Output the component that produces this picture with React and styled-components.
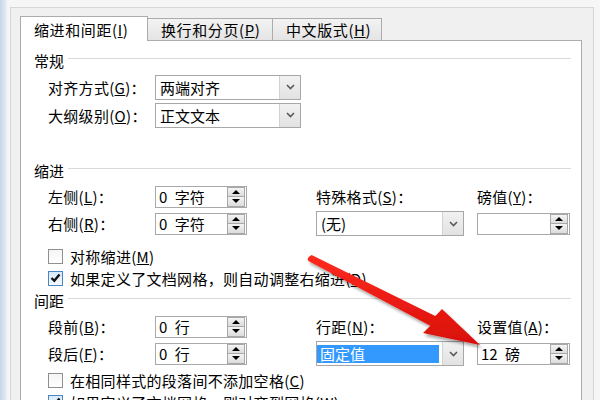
import React from 'react';
import styled, { createGlobalStyle } from 'styled-components';

const GlobalStyle = createGlobalStyle`
  html, body {
    margin: 0;
    padding: 0;
  }
  body {
    background: #f6f6f6;
    font-family: "Noto Sans CJK SC", "Liberation Sans", sans-serif;
  }
`;

const Screen = styled.div`
  position: relative;
  width: 600px;
  height: 400px;
  overflow: hidden;
  display: flex;
  background: #f6f6f6;
`;

const DesktopEdge = styled.div`
  flex: none;
  width: 7px;
  background: linear-gradient(to right, #c4d5ea, #e9eff6);
`;

const Dialog = styled.div`
  flex: none;
  box-sizing: border-box;
  width: 584px;
  height: 420px;
  margin: 7px 0 0 3px;
  padding: 8px 11px 0 9px;
  border: 1px solid #d6d6d6;
  border-bottom: none;
  background: #f0f0f0;
  display: flex;
  flex-direction: column;
`;

const TabBar = styled.div`
  display: flex;
  align-items: flex-end;
  height: 24px;
`;

const Tab = styled.div`
  position: relative;
  box-sizing: border-box;
  width: ${p => p.$width}px;
  height: ${p => (p.$active ? 25 : 22)}px;
  margin-left: ${p => (p.$first ? 0 : -1)}px;
  margin-bottom: ${p => (p.$active ? -1 : 0)}px;
  z-index: ${p => (p.$active ? 2 : 1)};
  padding-left: 13px;
  display: flex;
  align-items: center;
  border: 1px solid #acacac;
  border-bottom: none;
  background: ${p => (p.$active ? '#ffffff' : 'linear-gradient(#f3f3f3, #e4e4e4)')};
  font-size: 15px;
  letter-spacing: 0.6px;
  color: #000;
  white-space: nowrap;
`;

const Panel = styled.div`
  flex: 1;
  box-sizing: border-box;
  border: 1px solid #acacac;
  background: #ffffff;
  padding-right: 10px;
  display: flex;
  flex-direction: column;
`;

const SectionHead = styled.div`
  display: flex;
  align-items: center;
  height: 20px;
  margin-top: ${p => p.$gap}px;
  padding-left: 13px;
  font-size: 15px;
  color: #000;

  &::after {
    content: '';
    flex: 1;
    height: 1px;
    margin: -3px 0 0 4px;
    background: #dadada;
  }
`;

const FieldRow = styled.div`
  display: flex;
  align-items: center;
  height: 28px;
  padding-left: 27px;
  margin-top: ${p => p.$gap || 0}px;
`;

const Label = styled.span`
  width: ${p => (p.$width ? `${p.$width}px` : 'auto')};
  flex: none;
  font-size: 15px;
  letter-spacing: 0.3px;
  color: #000;
  white-space: nowrap;
`;

const Grid = styled.div`
  display: grid;
  grid-template-columns: 107px 92px 69px 148px 13px 93px;
  grid-auto-rows: 27px;
  align-items: center;
  padding-left: 27px;
  margin-top: ${p => p.$gap}px;
`;

const Cell = styled.div`
  grid-column: ${p => p.$col};
  grid-row: ${p => p.$row};
  display: flex;
  align-items: center;
`;

const SelectBox = styled.div`
  box-sizing: border-box;
  width: ${p => p.$width}px;
  height: 25px;
  display: flex;
  border: 1px solid #a7a7a7;
  background: #fff;
`;

const SelectValue = styled.div`
  flex: 1;
  display: flex;
  align-items: center;
  padding-left: 4px;
  font-size: 15px;
  color: #000;
  white-space: nowrap;
`;

const SelectHighlight = styled.div`
  flex: 1;
  align-self: center;
  height: 18px;
  margin: 0 3px 0 0;
  padding-left: 3px;
  display: flex;
  align-items: center;
  background: #3399ff;
  color: #fff;
  font-size: 15px;
  white-space: nowrap;
`;

const DropButton = styled.div`
  width: 20px;
  flex: none;
  display: flex;
  align-items: center;
  justify-content: center;
  background: linear-gradient(#f1f1f1, #e2e2e2);
  border-left: 1px solid #d2d2d2;
`;

const SpinBox = styled.div`
  box-sizing: border-box;
  width: ${p => p.$width}px;
  height: 22px;
  display: flex;
  align-items: center;
  border: 1px solid #a9a9a9;
  background: #fff;
`;

const SpinValue = styled.div`
  flex: 1;
  padding-left: 3px;
  font-size: 15px;
  word-spacing: 4px;
  color: #000;
  white-space: nowrap;
`;

const SpinButtons = styled.div`
  width: 18px;
  height: 20px;
  margin-right: 1px;
  display: flex;
  flex-direction: column;
`;

const SpinButton = styled.div`
  flex: 1;
  box-sizing: border-box;
  display: flex;
  align-items: center;
  justify-content: center;
  border: 1px solid #a8a8a8;
  margin-top: ${p => (p.$down ? -1 : 0)}px;
  background: linear-gradient(#f4f4f4, #dcdcdc);

  &::after {
    content: '';
    border-left: 4px solid transparent;
    border-right: 4px solid transparent;
    ${p => (p.$down ? 'border-top: 4px solid #000;' : 'border-bottom: 4px solid #000;')}
  }
`;

const CheckRow = styled.div`
  display: flex;
  align-items: center;
  gap: 7px;
  height: 22px;
  padding-left: 27px;
  margin-top: ${p => p.$gap || 0}px;
  font-size: 15px;
  letter-spacing: 0.3px;
  color: #000;
  white-space: nowrap;
`;

const CheckBox = styled.div`
  box-sizing: border-box;
  width: 15px;
  height: 15px;
  flex: none;
  display: flex;
  align-items: center;
  justify-content: center;
  border: 1px solid ${p => (p.$checked ? '#4a86c2' : '#8e8f8f')};
  background: ${p => (p.$checked ? 'linear-gradient(#d8e9fb, #f4f9ff)' : 'linear-gradient(#f4f4f4, #ffffff)')};
`;

const Overlay = styled.svg`
  position: absolute;
  left: 0;
  top: 0;
  pointer-events: none;
`;

const Chevron = () => (
  <svg width="9" height="6" viewBox="0 0 9 6">
    <polyline points="1,1 4.5,4.5 8,1" fill="none" stroke="#5a5a5a" strokeWidth="1.6" />
  </svg>
);

const Tick = () => (
  <svg width="11" height="10" viewBox="0 0 11 10">
    <polyline points="1.5,5 4.3,7.8 9.5,1.5" fill="none" stroke="#111" strokeWidth="2.4" />
  </svg>
);

function Select({ width, value, highlight }) {
  return (
    <SelectBox $width={width}>
      {highlight ? <SelectHighlight>{value}</SelectHighlight> : <SelectValue>{value}</SelectValue>}
      <DropButton>
        <Chevron />
      </DropButton>
    </SelectBox>
  );
}

function Spin({ width, value }) {
  return (
    <SpinBox $width={width}>
      <SpinValue>{value}</SpinValue>
      <SpinButtons>
        <SpinButton />
        <SpinButton $down />
      </SpinButtons>
    </SpinBox>
  );
}

function Check({ checked, gap, children }) {
  return (
    <CheckRow $gap={gap}>
      <CheckBox $checked={checked}>{checked && <Tick />}</CheckBox>
      <span>{children}</span>
    </CheckRow>
  );
}

function Arrow() {
  return (
    <Overlay width="600" height="400" viewBox="0 0 600 400">
      <defs>
        <linearGradient id="arrowFill" x1="0" y1="0" x2="0" y2="1">
          <stop offset="0" stopColor="#ff2a1f" />
          <stop offset="1" stopColor="#d80f0a" />
        </linearGradient>
        <filter id="arrowShadow" x="-10%" y="-10%" width="130%" height="130%">
          <feDropShadow dx="2" dy="3" stdDeviation="1.6" floodColor="#000" floodOpacity="0.35" />
        </filter>
      </defs>
      <path
        d="M311.6 254.9 L435.3 316 L442 309 L480 345 L423 333 L430.3 325.8 L308.4 261.1 Q306 258 311.6 254.9 Z"
        fill="url(#arrowFill)"
        filter="url(#arrowShadow)"
      />
    </Overlay>
  );
}

export default function App() {
  return (
    <>
      <GlobalStyle />
      <Screen>
        <DesktopEdge />
        <Dialog>
          <TabBar>
            <Tab $active $first $width={128}>缩进和间距(<u>I</u>)</Tab>
            <Tab $width={126}>换行和分页(<u>P</u>)</Tab>
            <Tab $width={110}>中文版式(<u>H</u>)</Tab>
          </TabBar>
          <Panel>
            <SectionHead $gap={9}>常规</SectionHead>
            <FieldRow $gap={3}>
              <Label $width={107}>对齐方式(<u>G</u>)：</Label>
              <Select width={146} value="两端对齐" />
            </FieldRow>
            <FieldRow>
              <Label $width={107}>大纲级别(<u>O</u>)：</Label>
              <Select width={146} value="正文文本" />
            </FieldRow>

            <SectionHead $gap={31}>缩进</SectionHead>
            <Grid $gap={3}>
              <Cell $col={1} $row={1}><Label>左侧(<u>L</u>)：</Label></Cell>
              <Cell $col={2} $row={1}><Spin width={92} value="0 字符" /></Cell>
              <Cell $col={4} $row={1}><Label>特殊格式(<u>S</u>)：</Label></Cell>
              <Cell $col={6} $row={1}><Label>磅值(<u>Y</u>)：</Label></Cell>
              <Cell $col={1} $row={2}><Label>右侧(<u>R</u>)：</Label></Cell>
              <Cell $col={2} $row={2}><Spin width={92} value="0 字符" /></Cell>
              <Cell $col={4} $row={2}><Select width={148} value="(无)" /></Cell>
              <Cell $col={6} $row={2}><Spin width={93} value="" /></Cell>
            </Grid>
            <Check gap={8}>对称缩进(<u>M</u>)</Check>
            <Check checked>如果定义了文档网格，则自动调整右缩进(<u>D</u>)</Check>

            <SectionHead $gap={1}>间距</SectionHead>
            <Grid $gap={3}>
              <Cell $col={1} $row={1}><Label>段前(<u>B</u>)：</Label></Cell>
              <Cell $col={2} $row={1}><Spin width={92} value="0 行" /></Cell>
              <Cell $col={4} $row={1}><Label>行距(<u>N</u>)：</Label></Cell>
              <Cell $col={6} $row={1}><Label>设置值(<u>A</u>)：</Label></Cell>
              <Cell $col={1} $row={2}><Label>段后(<u>F</u>)：</Label></Cell>
              <Cell $col={2} $row={2}><Spin width={92} value="0 行" /></Cell>
              <Cell $col={4} $row={2}><Select width={148} value="固定值" highlight /></Cell>
              <Cell $col={6} $row={2}><Spin width={93} value="12 磅" /></Cell>
            </Grid>
            <Check gap={2}>在相同样式的段落间不添加空格(<u>C</u>)</Check>
            <Check checked>如果定义了文档网格，则对齐到网格(<u>W</u>)</Check>
          </Panel>
        </Dialog>
        <Arrow />
      </Screen>
    </>
  );
}
